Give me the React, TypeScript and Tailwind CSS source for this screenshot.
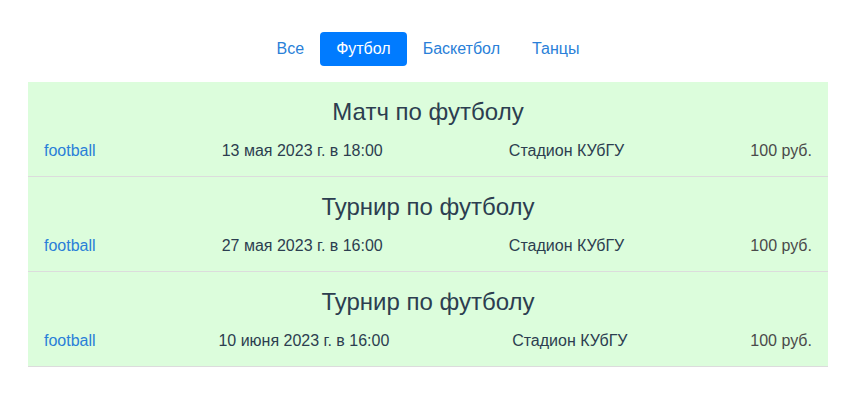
import React from "react";

const tabs = ["Все", "Футбол", "Баскетбол", "Танцы"];

const events = [
  { title: "Матч по футболу", date: "13 мая 2023 г. в 18:00" },
  { title: "Турнир по футболу", date: "27 мая 2023 г. в 16:00" },
  { title: "Турнир по футболу", date: "10 июня 2023 г. в 16:00" },
];

export default function App() {
  return (
    <div
      className="min-h-screen bg-white text-[#2c3e50]"
      style={{ fontFamily: '"Liberation Sans", Arial, sans-serif' }}
    >
      <div className="ml-[28px] w-[800px]">
        {/* Tabs */}
        <nav className="flex justify-center pt-8">
          {tabs.map((t) => (
            <a
              key={t}
              href="#"
              className={
                t === "Футбол"
                  ? "rounded-[4px] bg-[#007bff] px-4 py-[5px] text-base leading-6 text-white"
                  : "px-4 py-[5px] text-base leading-6 text-[#2a7fd8]"
              }
            >
              {t}
            </a>
          ))}
        </nav>

        {/* Events */}
        <div className="mt-4">
          {events.map((e, i) => (
            <div
              key={i}
              className="border-b border-[#dcdcdc] bg-[#dcfddc] px-4 pt-[16px] pb-[13px]"
            >
              <h2 className="text-center text-2xl leading-[28px]">{e.title}</h2>
              <div className="mt-[13px] flex justify-between text-base leading-6">
                <a href="#" className="text-[#2a7fd8]">
                  football
                </a>
                <span>{e.date}</span>
                <span>Стадион КУбГУ</span>
                <span className="text-[#4a4a4a]">100 руб.</span>
              </div>
            </div>
          ))}
        </div>
      </div>
    </div>
  );
}
